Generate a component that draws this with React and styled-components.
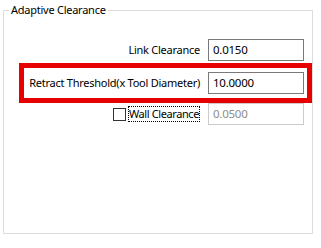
import React from "react";
import styled, { createGlobalStyle } from "styled-components";

const GlobalStyle = createGlobalStyle`
  html, body {
    margin: 0;
    padding: 0;
    background: #ffffff;
  }
  body {
    font-family: "Noto Sans", "Open Sans", sans-serif;
    font-size: 11px;
    letter-spacing: -0.25px;
    color: #000000;
  }
`;

const Page = styled.div`
  width: 321px;
  height: 248px;
  box-sizing: border-box;
  padding: 3px 0 0 3px;
`;

const Group = styled.fieldset`
  margin: 0;
  min-width: 0;
  width: 310px;
  height: 231px;
  box-sizing: border-box;
  border: 1px solid #dcdcdc;
  padding: 22px 8px 0 5px;
`;

const Legend = styled.legend`
  padding: 0 2px;
  font-size: 11px;
  line-height: 14px;
  color: #000000;
`;

const Row = styled.div`
  display: flex;
  justify-content: flex-end;
  align-items: center;
  gap: 8px;
`;

const Highlight = styled(Row)`
  margin: 2px -8px 0 10px;
  padding: 4px 3px 4px 0;
  border: 5px solid #e60000;
`;

const Label = styled.span`
  white-space: nowrap;
  line-height: 16px;
`;

const Field = styled.div`
  width: 96px;
  height: 22px;
  flex: none;
  box-sizing: border-box;
  border: 1px solid ${(p) => (p.disabled ? "#cccccc" : "#7a7a7a")};
  color: ${(p) => (p.disabled ? "#8d8d8d" : "#000000")};
  padding: 0 4px;
  display: flex;
  align-items: center;
  line-height: 16px;
  font-size: 11.5px;
`;

const CheckGroup = styled.label`
  display: flex;
  align-items: center;
  gap: 2px;
`;

const Box = styled.span`
  width: 13px;
  height: 13px;
  box-sizing: border-box;
  border: 1px solid #333333;
  background: #ffffff;
`;

const Focus = styled.span`
  border: 1px dotted #000000;
  padding: 0;
  line-height: 14px;
  letter-spacing: -0.4px;
`;

export default function App() {
  return (
    <>
      <GlobalStyle />
      <Page>
        <Group>
          <Legend>Adaptive Clearance</Legend>
          <Row>
            <Label>Link Clearance</Label>
            <Field>0.0150</Field>
          </Row>
          <Highlight>
            <Label>Retract Threshold(x Tool Diameter)</Label>
            <Field>10.0000</Field>
          </Highlight>
          <Row>
            <CheckGroup>
              <Box />
              <Focus>Wall Clearance</Focus>
            </CheckGroup>
            <Field disabled>0.0500</Field>
          </Row>
        </Group>
      </Page>
    </>
  );
}
